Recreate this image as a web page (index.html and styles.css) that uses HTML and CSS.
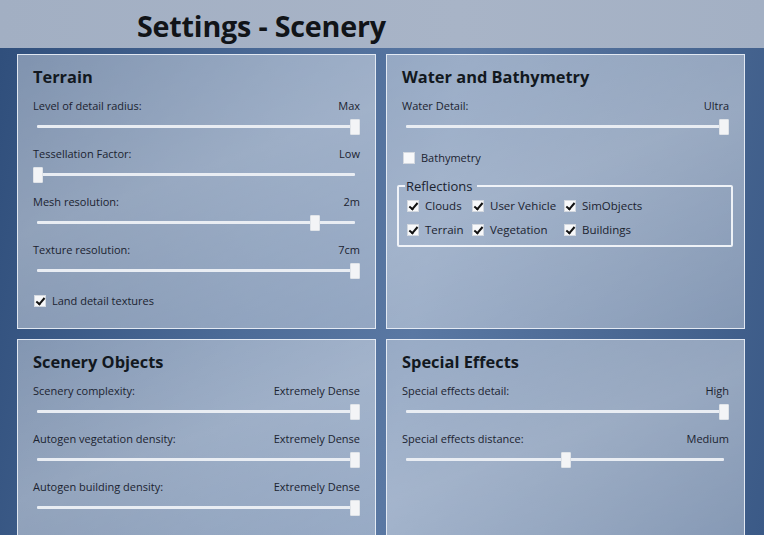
FILE: index.html
```html
<!DOCTYPE html>
<html>
<head>
<meta charset="utf-8">
<link rel="stylesheet" href="styles.css">
</head>
<body>
<header class="header"><h1 class="title">Settings - Scenery</h1></header>
<main class="grid">
  <section class="panel">
    <h2 class="panel-title">Terrain</h2>
    <div class="setting">
      <div class="labels"><span>Level of detail radius:</span><span>Max</span></div>
      <div class="slider"><div class="track"></div><div class="thumb" style="left:100%"></div></div>
    </div>
    <div class="setting">
      <div class="labels"><span>Tessellation Factor:</span><span>Low</span></div>
      <div class="slider"><div class="track"></div><div class="thumb" style="left:0%"></div></div>
    </div>
    <div class="setting">
      <div class="labels"><span>Mesh resolution:</span><span>2m</span></div>
      <div class="slider"><div class="track"></div><div class="thumb" style="left:87.4%"></div></div>
    </div>
    <div class="setting">
      <div class="labels"><span>Texture resolution:</span><span>7cm</span></div>
      <div class="slider"><div class="track"></div><div class="thumb" style="left:100%"></div></div>
    </div>
    <label class="check land"><span class="box on"></span>Land detail textures</label>
  </section>

  <section class="panel">
    <h2 class="panel-title">Water and Bathymetry</h2>
    <div class="setting">
      <div class="labels"><span>Water Detail:</span><span>Ultra</span></div>
      <div class="slider"><div class="track"></div><div class="thumb" style="left:100%"></div></div>
    </div>
    <label class="check bathy"><span class="box"></span>Bathymetry</label>
    <fieldset class="group">
      <legend class="legend">Reflections</legend>
      <div class="checks">
        <label class="check"><span class="box on"></span>Clouds</label>
        <label class="check"><span class="box on"></span>User Vehicle</label>
        <label class="check"><span class="box on"></span>SimObjects</label>
        <label class="check"><span class="box on"></span>Terrain</label>
        <label class="check"><span class="box on"></span>Vegetation</label>
        <label class="check"><span class="box on"></span>Buildings</label>
      </div>
    </fieldset>
  </section>

  <section class="panel">
    <h2 class="panel-title">Scenery Objects</h2>
    <div class="setting">
      <div class="labels"><span>Scenery complexity:</span><span>Extremely Dense</span></div>
      <div class="slider"><div class="track"></div><div class="thumb" style="left:100%"></div></div>
    </div>
    <div class="setting">
      <div class="labels"><span>Autogen vegetation density:</span><span>Extremely Dense</span></div>
      <div class="slider"><div class="track"></div><div class="thumb" style="left:100%"></div></div>
    </div>
    <div class="setting">
      <div class="labels"><span>Autogen building density:</span><span>Extremely Dense</span></div>
      <div class="slider"><div class="track"></div><div class="thumb" style="left:100%"></div></div>
    </div>
  </section>

  <section class="panel">
    <h2 class="panel-title">Special Effects</h2>
    <div class="setting">
      <div class="labels"><span>Special effects detail:</span><span>High</span></div>
      <div class="slider"><div class="track"></div><div class="thumb" style="left:100%"></div></div>
    </div>
    <div class="setting">
      <div class="labels"><span>Special effects distance:</span><span>Medium</span></div>
      <div class="slider"><div class="track"></div><div class="thumb" style="left:50%"></div></div>
    </div>
  </section>
</main>
</body>
</html>
```
FILE: styles.css
```css
html, body {
  margin: 0;
  padding: 0;
}
body {
  width: 764px;
  height: 535px;
  overflow: hidden;
  font-family: "Open Sans", "Noto Sans", sans-serif;
  color: #1b2330;
  background: linear-gradient(100deg, #2f4e7b 0%, #4d6c98 35%, #5a78a3 55%, #4a6893 80%, #3b5a87 100%);
}
.header {
  height: 48px;
  background: linear-gradient(90deg, #a2afc3, #a8b4c7 60%, #a3b0c4);
  display: flex;
  align-items: center;
  padding-left: 137px;
  box-sizing: border-box;
}
.title {
  margin: 0;
  font-size: 28.7px;
  font-weight: 700;
  color: #111418;
  letter-spacing: -0.2px;
  line-height: 1;
  padding-top: 4px;
}
.grid {
  display: grid;
  grid-template-columns: 359px 359px;
  grid-template-rows: 275px 230px;
  gap: 10px;
  padding: 6px 0 0 17px;
  overflow: hidden;
  height: 487px;
  box-sizing: border-box;
}
.panel {
  border: 1px solid rgba(240, 245, 252, 0.85);
  background: linear-gradient(160deg, rgba(255,255,255,0.38), rgba(255,255,255,0.45) 45%, rgba(255,255,255,0.36));
  padding: 10px 15px 0 15px;
  box-sizing: border-box;
}
.panel-title {
  margin: 0 0 9px 0;
  font-size: 16.4px;
  line-height: 24px;
  font-weight: 700;
  color: #121820;
}
.labels {
  display: flex;
  justify-content: space-between;
  font-size: 11px;
  line-height: 16px;
  height: 16px;
}
.slider {
  position: relative;
  height: 32px;
  margin-right: 10px;
}
.track {
  position: absolute;
  left: 4px;
  right: -5px;
  top: 11px;
  height: 3px;
  background: #e9edf3;
  border-radius: 1px;
}
.thumb {
  position: absolute;
  top: 5px;
  width: 10px;
  height: 16px;
  background: #f3f4f6;
  border: 1px solid #dfe3e8;
  box-sizing: border-box;
  border-radius: 1px;
}
.check {
  display: flex;
  align-items: center;
  font-size: 11px;
  line-height: 16px;
  height: 16px;
}
.box {
  width: 12px;
  height: 12px;
  background: #f7f8fa;
  border: 1px solid #d4d9e0;
  box-sizing: border-box;
  margin-right: 6px;
  position: relative;
  flex: none;
}
.box.on::after {
  content: "";
  position: absolute;
  left: 3px;
  top: 0px;
  width: 3px;
  height: 7px;
  border: solid #111;
  border-width: 0 2px 2px 0;
  transform: rotate(40deg);
}
.land {
  margin-top: 3px;
  margin-left: 1px;
}
.bathy {
  margin-top: 4px;
  margin-left: 1px;
}
.group {
  margin: 12px -4px 0 -5px;
  border: 2px solid rgba(246, 248, 252, 0.92);
  border-radius: 2px;
  padding: 0 8px 7px 8px;
}
.legend {
  font-size: 13px;
  padding: 0 5px 0 1px;
  margin-left: -2px;
  line-height: 16px;
}
.checks {
  display: grid;
  grid-template-columns: 65px 92px auto;
  row-gap: 8px;
  margin-left: 0;
  padding-top: 4px;
}
.checks .check {
  font-size: 11.5px;
}
```
